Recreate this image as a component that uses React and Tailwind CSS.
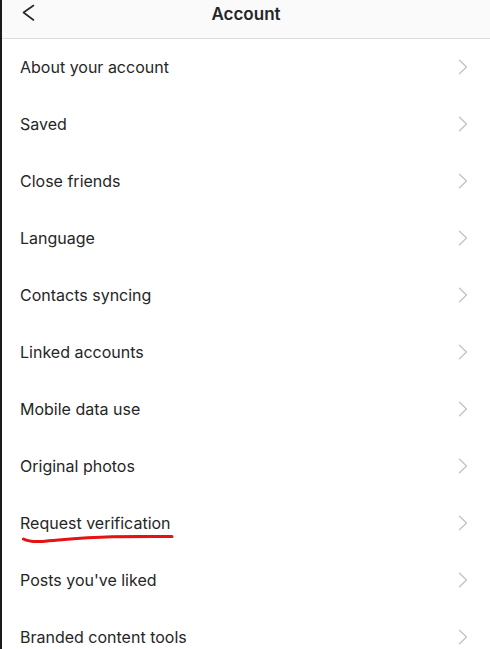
const items = [
  "About your account",
  "Saved",
  "Close friends",
  "Language",
  "Contacts syncing",
  "Linked accounts",
  "Mobile data use",
  "Original photos",
  "Request verification",
  "Posts you've liked",
  "Branded content tools",
];

function BackIcon() {
  return (
    <svg width="14" height="18" viewBox="0 0 14 18" fill="none">
      <path d="M11.5 1.5L1.5 8.5L11.5 16" stroke="#262626" strokeWidth="1.6" strokeLinecap="round" strokeLinejoin="round" />
    </svg>
  );
}

function Chevron() {
  return (
    <svg width="10" height="16" viewBox="0 0 10 16" fill="none">
      <path d="M1.5 1.2L8.5 8L1.5 14.8" stroke="#c4c4c4" strokeWidth="1.4" strokeLinecap="round" strokeLinejoin="round" />
    </svg>
  );
}

function Scribble() {
  return (
    <svg className="absolute left-0 top-[40px]" width="180" height="14" viewBox="0 0 180 14" fill="none">
      <path
        d="M21.5 4C25 6 30 7 40 6.5C60 5 80 2.5 110 1.8C135 1.3 155 1.5 170 1.5"
        stroke="#e41212"
        strokeWidth="3"
        strokeLinecap="round"
      />
    </svg>
  );
}

function Row({ label }) {
  return (
    <div className="relative h-[57px] flex items-center justify-between pl-[18px] pr-[22px] pb-[2px]">
      <span className="text-[16px] text-[#262626]">{label}</span>
      <Chevron />
      {label === "Request verification" ? <Scribble /> : null}
    </div>
  );
}

export default function App() {
  return (
    <div
      className="w-[490px] h-[649px] overflow-hidden bg-white border-l-2 border-[#1a1a1a]"
      style={{ fontFamily: "Inter, 'Liberation Sans', sans-serif" }}
    >
      {/* Header */}
      <div className="relative h-[39px] bg-[#fafafa] border-b border-[#dbdbdb] flex justify-center">
        <div className="absolute left-[20px] top-[4px]">
          <BackIcon />
        </div>
        <span className="mt-[2px] text-[17px] font-semibold text-[#262626]">Account</span>
      </div>

      {items.map((label) => (
        <Row key={label} label={label} />
      ))}
    </div>
  );
}
